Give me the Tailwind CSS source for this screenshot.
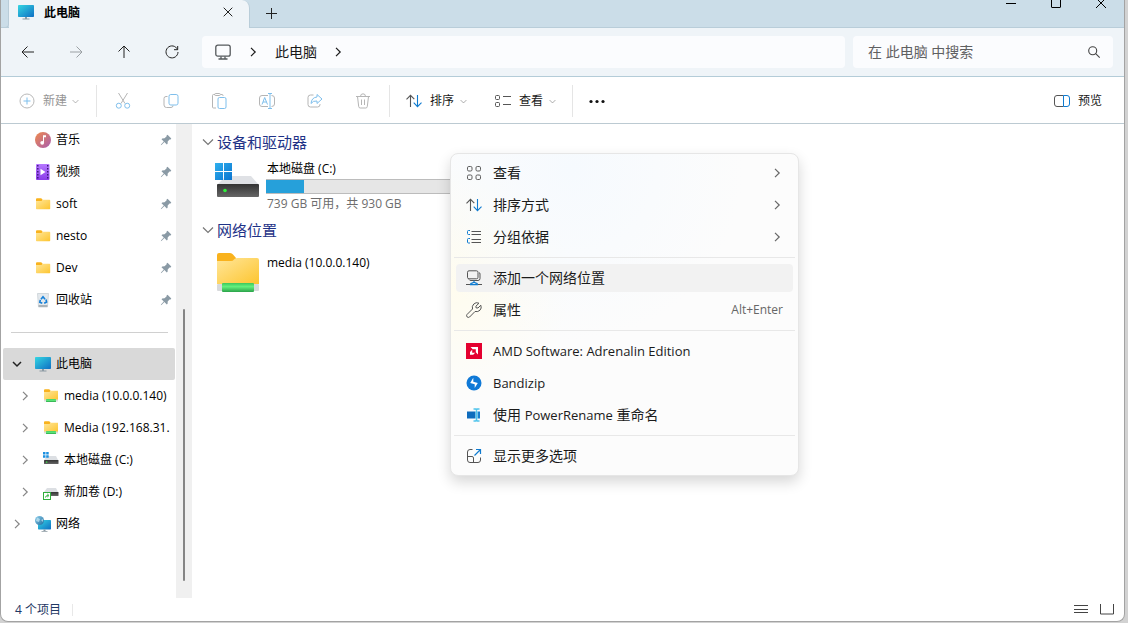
<!DOCTYPE html>
<html lang="zh-CN">
<head>
<meta charset="utf-8">
<meta name="viewport" content="width=device-width, initial-scale=1">
<title>此电脑</title>
<script src="https://cdn.jsdelivr.net/npm/@tailwindcss/browser@4"></script>
</head>
<body class="h-screen overflow-hidden bg-[#d2d2d2] pr-[3px] pb-px font-['Open_Sans','Noto_Sans_CJK_SC',sans-serif] text-xs text-black">
<svg class="absolute size-0" aria-hidden="true">
  <defs>
    <linearGradient id="screen" x1="0" y1="0" x2="1" y2="1"><stop offset="0" stop-color="#35d6e2"/><stop offset="1" stop-color="#0f6fc4"/></linearGradient>
    <linearGradient id="folder" x1="0" y1="0" x2="1" y2="1"><stop offset="0" stop-color="#ffe69a"/><stop offset="1" stop-color="#fdc52f"/></linearGradient>
    <linearGradient id="music" x1="0" y1="0" x2="1" y2="1"><stop offset="0" stop-color="#f08a4b"/><stop offset="1" stop-color="#a85cb0"/></linearGradient>
    <linearGradient id="video" x1="0" y1="0" x2="0" y2="1"><stop offset="0" stop-color="#b678ff"/><stop offset="1" stop-color="#8a3be8"/></linearGradient>
    <linearGradient id="pipe" x1="0" y1="0" x2="0" y2="1"><stop offset="0" stop-color="#3cc75c"/><stop offset=".4" stop-color="#63f07e"/><stop offset="1" stop-color="#2ba34a"/></linearGradient>
    <linearGradient id="drive" x1="0" y1="0" x2="0" y2="1"><stop offset="0" stop-color="#333"/><stop offset="1" stop-color="#666"/></linearGradient>
    <linearGradient id="win" x1="0" y1="0" x2="1" y2="1"><stop offset="0" stop-color="#2fb0ee"/><stop offset="1" stop-color="#0a74cf"/></linearGradient>
    <linearGradient id="globe" x1="0" y1="0" x2="1" y2="1"><stop offset="0" stop-color="#8fd0ee"/><stop offset="1" stop-color="#1f6c9e"/></linearGradient>
  </defs>
  <symbol id="i-pc" viewBox="0 0 16 16"><rect x="0" y="1" width="16" height="12" rx=".8" fill="url(#screen)"/><path d="M7 13h2v2H7zM4.500 14.500h7v1h-7z" fill="#8c9aa3"/></symbol>
  <symbol id="i-folder" viewBox="0 0 16 16"><path d="M1 3.200q0-1 1-1h4.200l1.300 1.300v3H1z" fill="#f9b21d"/><path d="M1 5h5.500l1.200-1.300H14.500q.7 0 .7.700V12.500q0 .7-.7.700H1.700q-.7 0-.7-.7z" fill="url(#folder)"/></symbol>
  <symbol id="i-netfolder" viewBox="0 0 16 16"><path d="M1 2.200q0-1 1-1h4.200l1.300 1.300v3H1z" fill="#f9b21d"/><path d="M1 4h5.500l1.200-1.300H15V12H1z" fill="url(#folder)"/><path d="M1 11.500h14v2H1z" fill="#ddd"/><rect x="3" y="11" width="10" height="3" rx=".5" fill="url(#pipe)"/></symbol>
  <symbol id="i-pin" viewBox="0 0 12 12"><path d="M7.500 .8 11.300 4.500 10.600 5.500 9.500 5.600 7.700 7.500 7.600 9.800 6.800 10.500 4.400 8.100 1.700 10.700 .8 11.200 1.200 10.200 3.800 7.500 1.500 5.200 2.200 4.400 4.500 4.300 6.500 2.500 6.600 1.500Z" fill="#8a9aa5"/></symbol>
  <symbol id="i-right" viewBox="0 0 12 12"><path d="M4 1.800 8.200 6 4 10.200" fill="none" stroke="currentColor" stroke-width="1.200"/></symbol>
  <symbol id="i-down" viewBox="0 0 12 12"><path d="M1 3.500 6 8.500 11 3.500" fill="none" stroke="currentColor" stroke-width="1.200"/></symbol>
  <symbol id="i-sort" viewBox="0 0 16 16"><g fill="none" stroke-width="1.100"><path d="M4.500 14V2.500M.5 6.300 4.500 2.300 8.300 6.100" stroke="#555"/><path d="M11.500 2v11.500M7.700 9.700 11.500 13.600 15.500 9.700" stroke="#0f7bd0"/></g></symbol>
</svg>

<div class="flex h-full flex-col overflow-hidden rounded-b-lg border border-t-0 border-[#a3a3a3] bg-white">
  <header>
    <div class="flex h-7 border-b border-[#b9cdd9] bg-[#cbdde8]">
      <div class="h-7 w-2 shrink-0 rounded-br border-r border-b border-[#b9cdd9]"></div>
      <div class="flex h-7 w-[241px] shrink-0 items-start rounded-tr-lg border-r border-[#b9cdd9] bg-[#eff4f8] pr-4 pl-[9px]">
        <svg class="mt-1 size-4"><use href="#i-pc"/></svg>
        <h1 class="ml-[10px] flex-1 pt-[5px] text-xs leading-4 font-bold">此电脑</h1>
        <button aria-label="关闭标签页" class="mt-[7px]"><svg class="block size-[10px]" viewBox="0 0 10 10"><path d="M.7.7l8.600 8.600M9.300.7.7 9.300" stroke="#222"/></svg></button>
      </div>
      <button aria-label="新建标签页" class="ml-4 flex h-[26px] items-center"><svg class="block size-[11px]" viewBox="0 0 11 11"><path d="M5.500 0v11M0 5.500h11" stroke="#222"/></svg></button>
      <div class="ml-auto flex items-start pr-px">
        <button aria-label="最小化" class="flex w-[45px] justify-center"><svg class="block h-2 w-[10px]" viewBox="0 0 10 8"><path d="M0 3.500h10" stroke="#000"/></svg></button>
        <button aria-label="最大化" class="flex w-[45px] justify-center"><svg class="block h-2 w-[10px]" viewBox="0 0 10 8"><path d="M.5 0v7q0 .5.500.5h8q.5 0 .5-.5V0" stroke="#000" fill="none"/></svg></button>
        <button aria-label="关闭" class="flex w-[45px] justify-center"><svg class="block h-2 w-[10px]" viewBox="0 0 10 8"><path d="M0 8 8 0M10 8 2 0" stroke="#000"/></svg></button>
      </div>
    </div>

    <div class="flex h-[49px] items-center border-b border-[#b4ccd8] bg-[#eff4f8] pr-[11px] pl-[3px]">
      <nav class="flex shrink-0 text-[#222]">
        <button aria-label="后退" class="flex w-12 justify-center"><svg class="size-4" viewBox="0 0 16 16" fill="none" stroke="currentColor"><path d="M14 8H2.200M7.500 2.500 2 8l5.500 5.500"/></svg></button>
        <button aria-label="前进" disabled class="flex w-12 justify-center text-[#9ba0a4]"><svg class="size-4" viewBox="0 0 16 16" fill="none" stroke="currentColor"><path d="M2 8h11.800M8.500 2.500 14 8l-5.500 5.500"/></svg></button>
        <button aria-label="向上" class="flex w-12 justify-center"><svg class="size-4" viewBox="0 0 16 16" fill="none" stroke="currentColor"><path d="M8 14V2.200M2.500 7.500 8 2l5.500 5.500"/></svg></button>
        <button aria-label="刷新" class="flex w-12 justify-center"><svg class="size-4" viewBox="0 0 16 16" fill="none" stroke="currentColor"><path d="M13.500 5.500A6 6 0 1 0 14 8M13.700 2v3.700H10"/></svg></button>
      </nav>
      <div class="ml-[6px] flex h-8 flex-1 items-center rounded bg-[#fbfcfe] pl-[13px] text-sm text-[#191919]">
        <svg class="size-4" viewBox="0 0 16 16" fill="none" stroke="#55595c" stroke-width="1.300"><rect x=".8" y="1.200" width="14.400" height="11" rx="2"/><path d="M6 12.500v2.200M10 12.500v2.200M3.500 15h9"/></svg>
        <svg class="ml-4 size-3"><use href="#i-right"/></svg>
        <a href="#" class="ml-4">此电脑</a>
        <svg class="ml-[15px] size-3"><use href="#i-right"/></svg>
      </div>
      <label class="ml-2 flex h-8 w-[260px] items-center rounded bg-[#fbfcfe] pr-3 pl-[15px]">
        <input type="search" aria-label="搜索" placeholder="在 此电脑 中搜索" class="min-w-0 flex-1 bg-transparent text-sm outline-none placeholder:text-[#5f6062]">
        <svg class="size-[14px]" viewBox="0 0 14 14" fill="none" stroke="#444" stroke-width="1.100"><circle cx="5.700" cy="5.700" r="4"/><path d="M8.700 8.700 12.700 12.700"/></svg>
      </label>
    </div>

    <div class="flex h-[47px] items-center border-b border-[#bccad2] pt-[2px] text-xs text-[#191919]" role="toolbar" aria-label="命令栏">
      <button disabled class="flex w-[95px] items-center pl-[18px] text-[#959595]">
        <svg class="size-4" viewBox="0 0 16 16" fill="none"><circle cx="8" cy="8" r="7" stroke="#b9b9b9"/><path d="M8 4.500v7M4.500 8h7" stroke="#7fbfec"/></svg>
        <span class="ml-2">新建</span>
        <svg class="ml-[5px] size-[7px]"><use href="#i-down"/></svg>
      </button>
      <div class="h-8 w-px bg-[#e5e5e5]"></div>
      <div class="ml-[2px] flex">
        <button disabled aria-label="剪切" class="flex w-12 justify-center"><svg class="size-4" viewBox="0 0 16 16" fill="none"><path d="M3.500 0 10 10.500M12.500 0 6 10.500" stroke="#b5b5b5"/><circle cx="3.800" cy="12.700" r="2.500" stroke="#7fbfec"/><circle cx="12.200" cy="12.700" r="2.500" stroke="#7fbfec"/></svg></button>
        <button disabled aria-label="复制" class="flex w-12 justify-center"><svg class="size-4" viewBox="0 0 16 16" fill="none"><path d="M4.500 3.500H3q-2 0-2 2V12q0 2.500 2.500 2.500H8q2 0 2-2" stroke="#b5b5b5"/><rect x="6" y="1.500" width="9" height="10.500" rx="1.800" stroke="#7fbfec"/></svg></button>
        <button disabled aria-label="粘贴" class="flex w-12 justify-center"><svg class="size-4" viewBox="0 0 16 16" fill="none"><path d="M5 15H2.500q-1 0-1-1V2.500q0-1 1-1H4M9.500 1.500H11q1 0 1 1V3M4.500.5h4q.8 0 .8 1t-.8 1h-4q-.8 0-.8-1t.8-1" stroke="#b5b5b5"/><rect x="7" y="4.500" width="8" height="11" rx="1.500" stroke="#7fbfec"/></svg></button>
        <button disabled aria-label="重命名" class="flex w-12 justify-center"><svg class="size-4" viewBox="0 0 16 16" fill="none"><path d="M9 2.500H3q-2.500 0-2.500 2.500v6q0 2.500 2.500 2.500h6M12.500 2.500q3 0 3 2.500v6q0 2.500-3 2.500" stroke="#b5b5b5"/><path d="M11 .5v15M9 .5h4M9 15.500h4M3 11.500 5.700 4.500 8.500 11.500M4 9h3.500" stroke="#7fbfec"/></svg></button>
        <button disabled aria-label="共享" class="flex w-12 justify-center"><svg class="size-4" viewBox="0 0 16 16" fill="none"><path d="M6.500 2H3.500Q1 2 1 4.500v7Q1 14 3.500 14h7q2.500 0 2.500-2.500V11" stroke="#b5b5b5"/><path d="M10 1.500 15 6l-5 4.500V8Q6 7.500 4 10.500 4.500 4.500 10 4Z" stroke="#7fbfec" stroke-linejoin="round"/></svg></button>
        <button disabled aria-label="删除" class="flex w-12 justify-center"><svg class="size-4" viewBox="0 0 16 16" fill="none" stroke="#b5b5b5"><path d="M1 3.500h14M5.500 3.500Q5.500.8 8 .8t2.500 2.700M2.500 3.500l1.200 10q.2 1.500 1.500 1.500h5.600q1.300 0 1.500-1.500l1.200-10M6.500 6.500v5.500M9.500 6.500v5.500"/></svg></button>
      </div>
      <div class="ml-[2px] h-8 w-px bg-[#e5e5e5]"></div>
      <button class="ml-4 flex items-center"><svg class="size-4"><use href="#i-sort"/></svg><span class="ml-2">排序</span><svg class="ml-[6px] size-[7px] text-[#888]"><use href="#i-down"/></svg></button>
      <button class="ml-7 flex items-center"><svg class="size-4" viewBox="0 0 16 16" fill="none" stroke="#555"><rect x=".5" y="2.500" width="4" height="4" rx="1"/><rect x=".5" y="9.500" width="4" height="4" rx="1"/><path d="M8 3.500h8M8 11.500h8"/></svg><span class="ml-2">查看</span><svg class="ml-[6px] size-[7px] text-[#888]"><use href="#i-down"/></svg></button>
      <div class="ml-4 h-8 w-px bg-[#e5e5e5]"></div>
      <button aria-label="更多" class="ml-4"><svg class="size-4" viewBox="0 0 16 16" fill="#111"><circle cx="2" cy="8.500" r="1.600"/><circle cx="8" cy="8.500" r="1.600"/><circle cx="14" cy="8.500" r="1.600"/></svg></button>
      <button class="mr-[22px] ml-auto flex items-center gap-2"><svg class="size-4" viewBox="0 0 16 16" fill="none"><path d="M9.500 2.500H3Q.5 2.500.5 5v6Q.5 13.500 3 13.500h6.500" stroke="#555"/><path d="M9.500 2.500H13q2.500 0 2.500 2.500v6q0 2.500-2.500 2.500H9.500z" stroke="#0f7bd0"/></svg><span>预览</span></button>
    </div>
  </header>

  <div class="flex min-h-0 flex-1">
    <aside class="w-[175px] shrink-0 overflow-hidden">
      <ul>
        <li class="flex h-8 items-center pr-1 pl-[34px]"><svg class="size-4" viewBox="0 0 16 16"><circle cx="8" cy="8" r="8" fill="url(#music)"/><path d="M8 3.300h3v2H9v5.200H8z" fill="#fff"/><circle cx="7.200" cy="10.800" r="1.900" fill="#fff"/></svg><a href="#" class="ml-[5px] flex-1">音乐</a><svg class="size-3"><use href="#i-pin"/></svg></li>
        <li class="flex h-8 items-center pr-1 pl-[34px]"><svg class="size-4" viewBox="0 0 16 16"><rect x="1" width="13.500" height="16" rx="1" fill="url(#video)"/><path d="M2.800 1v14M12.700 1v14" stroke="#3d1678" stroke-width="1.400" stroke-dasharray="1.500 1.500"/><path d="M5.500 4.800 10.500 8l-5 3.200z" fill="#fff"/></svg><a href="#" class="ml-[5px] flex-1">视频</a><svg class="size-3"><use href="#i-pin"/></svg></li>
        <li class="flex h-8 items-center pr-1 pl-[34px]"><svg class="size-4"><use href="#i-folder"/></svg><a href="#" class="ml-[5px] flex-1">soft</a><svg class="size-3"><use href="#i-pin"/></svg></li>
        <li class="flex h-8 items-center pr-1 pl-[34px]"><svg class="size-4"><use href="#i-folder"/></svg><a href="#" class="ml-[5px] flex-1">nesto</a><svg class="size-3"><use href="#i-pin"/></svg></li>
        <li class="flex h-8 items-center pr-1 pl-[34px]"><svg class="size-4"><use href="#i-folder"/></svg><a href="#" class="ml-[5px] flex-1">Dev</a><svg class="size-3"><use href="#i-pin"/></svg></li>
        <li class="flex h-8 items-center pr-1 pl-[34px]"><svg class="size-4" viewBox="0 0 16 16"><path d="M2.500 1.500h11l-1 13.500h-9z" fill="#e4e9ed" stroke="#c3cbd1" stroke-width=".7"/><path d="M3.500 13h9l-.2 2H3.700z" fill="#aab3b9"/><path d="M6 7.200 8 4.800l2 2.400M11 7.500l.6 2.500-2.400 1.200M7.300 11.200 4.800 10.200 5.300 7.800" stroke="#1680d8" stroke-width="1.600" fill="none"/></svg><a href="#" class="ml-[5px] flex-1">回收站</a><svg class="size-3"><use href="#i-pin"/></svg></li>
      </ul>
      <hr class="mt-4 mr-2 mb-[15px] ml-[10px] border-[#d0d0d0]">
      <ul>
        <li class="mr-px ml-[2px] flex h-8 items-center rounded-xs bg-[#d9d9d9] pl-[9px]"><button aria-label="折叠"><svg class="block size-[10px] text-[#222]" viewBox="0 0 10 10"><path d="M1 3 5 7 9 3" fill="none" stroke="currentColor" stroke-width="1.500"/></svg></button><svg class="ml-[13px] size-4"><use href="#i-pc"/></svg><a href="#" class="ml-[5px]">此电脑</a></li>
        <li class="flex h-8 items-center overflow-hidden pl-[18px] whitespace-nowrap"><button aria-label="展开" class="text-[#858585]"><svg class="block size-3"><use href="#i-right"/></svg></button><svg class="ml-3 size-4 shrink-0"><use href="#i-netfolder"/></svg><a href="#" class="ml-[5px]">media (10.0.0.140)</a></li>
        <li class="flex h-8 items-center overflow-hidden pl-[18px] whitespace-nowrap"><button aria-label="展开" class="text-[#858585]"><svg class="block size-3"><use href="#i-right"/></svg></button><svg class="ml-3 size-4 shrink-0"><use href="#i-netfolder"/></svg><a href="#" class="ml-[5px]">Media (192.168.31.</a></li>
        <li class="flex h-8 items-center pl-[18px]"><button aria-label="展开" class="text-[#858585]"><svg class="block size-3"><use href="#i-right"/></svg></button><svg class="ml-3 size-4" viewBox="0 0 16 16"><path d="M4 4h9l2 4H1z" fill="#dcdfe3"/><rect x="1" y="8" width="14.500" height="4" rx=".5" fill="url(#drive)"/><rect x="3" y="9.500" width="1.300" height="1.300" fill="#3fe04a"/><path d="M0 0h2.500v2.500H0zM3.200 0h2.500v2.500H3.200zM0 3.200h2.500v2.500H0zM3.200 3.200h2.500v2.500H3.200z" fill="#1c90e0"/></svg><a href="#" class="ml-[5px]">本地磁盘 (C:)</a></li>
        <li class="flex h-8 items-center pl-[18px]"><button aria-label="展开" class="text-[#858585]"><svg class="block size-3"><use href="#i-right"/></svg></button><svg class="ml-3 size-4" viewBox="0 0 16 16"><path d="M4 4h9l2 4H1z" fill="#dcdfe3"/><rect x="1" y="8" width="14.500" height="4" rx=".5" fill="url(#drive)"/><rect x=".5" y="8.500" width="7" height="7" fill="#fff" stroke="#2fae3c"/><path d="M2.500 13.500q0-2 2.500-2M4.300 10l1.700 1.500L4.300 13" fill="none" stroke="#2fae3c"/></svg><a href="#" class="ml-[5px]">新加卷 (D:)</a></li>
        <li class="flex h-8 items-center pl-[10px]"><button aria-label="展开" class="text-[#858585]"><svg class="block size-3"><use href="#i-right"/></svg></button><svg class="ml-3 size-4" viewBox="0 0 16 16"><rect x="3" y="4" width="13" height="9.500" rx=".7" fill="url(#screen)"/><path d="M8.500 13.500h2v1.500h2v.8h-6V15h2z" fill="#8c9aa3"/><circle cx="4.500" cy="4.500" r="4.500" fill="url(#globe)"/><path d="M2 1.500 5 3 4 6 1 5zM6 4l2-1v3z" fill="#c9e9f5" opacity=".7"/></svg><a href="#" class="ml-[5px]">网络</a></li>
      </ul>
    </aside>
    <div class="flex w-4 shrink-0 flex-col items-center bg-[#f0f0f0]">
      <div class="mt-auto mb-[17px] h-[272px] w-[2px] rounded-full bg-[#858585]"></div>
    </div>

    <main class="min-w-0 flex-1 pt-2 pl-[10px]">
      <section>
        <h2 class="flex h-5 items-center gap-[3px] text-[15px] text-[#1e3287]"><svg class="size-3 text-[#777]"><use href="#i-down"/></svg>设备和驱动器</h2>
        <div class="mt-2 flex pl-3">
          <svg class="mt-[2px] h-10 w-[46px]" viewBox="0 0 46 40"><path d="M12 14h25l8 9H3z" fill="#dfe1e5"/><rect x="3" y="22" width="42" height="13" rx="1" fill="url(#drive)"/><circle cx="11" cy="28.500" r="1.800" fill="#2ef03a"/><path d="M1 1h8v8H1zM10 1h8v8h-8zM1 10h8v8H1zM10 10h8v8h-8z" fill="url(#win)"/></svg>
          <div class="ml-[6px] w-[232px]">
            <a href="#" class="ml-px block leading-[18px]">本地磁盘 (C:)</a>
            <div class="mt-px h-[15px] border-y border-[#bcbcbc] bg-[#e6e6e6]" role="meter" aria-label="已用空间" aria-valuenow="191" aria-valuemin="0" aria-valuemax="930"><div class="h-full w-[38px] bg-[#26a0da]"></div></div>
            <p class="mt-px ml-px leading-[18px] text-[#6d6d6d]">739 GB 可用，共 930 GB</p>
          </div>
        </div>
      </section>
      <section class="mt-[7px]">
        <h2 class="flex h-5 items-center gap-[3px] text-[15px] text-[#1e3287]"><svg class="size-3 text-[#777]"><use href="#i-down"/></svg>网络位置</h2>
        <div class="mt-3 flex pl-3">
          <svg class="h-[42px] w-[46px]" viewBox="0 0 46 42"><path d="M3 3q0-2 2-2h11q2 0 3 1.500L22 6v10H3z" fill="#f9b21d"/><path d="M3 9h14q2 0 3-1.500t3-1.500H43q2 0 2 2V32H3z" fill="url(#folder)"/><rect x="3" y="32" width="42" height="7" rx="1" fill="#d8dadc"/><rect x="8" y="31" width="32" height="9" rx="1" fill="url(#pipe)"/></svg>
          <a href="#" class="mt-[2px] ml-[7px] leading-[18px]">media (10.0.0.140)</a>
        </div>
      </section>
    </main>
  </div>

  <footer class="flex h-[23px] shrink-0 items-center pr-[10px] pl-[14px] text-[#1f3864]">
    <p>4 个项目</p>
    <div class="ml-[11px] h-3 w-px bg-[#e8e8e8]"></div>
    <button aria-label="详细信息" class="ml-auto"><svg class="block h-[11px] w-[14px]" viewBox="0 0 14 11"><path d="M0 1.500h14M0 5.500h14M0 8.500h14" stroke="#444"/></svg></button>
    <button aria-label="大图标" class="ml-3"><svg class="block h-[11px] w-[14px]" viewBox="0 0 14 11"><path d="M.5 0v10h13V0" fill="none" stroke="#444"/></svg></button>
  </footer>
</div>

<div role="menu" class="absolute top-[153px] left-[450px] flex w-[349px] flex-col rounded-lg border border-[#e6e6e6] bg-[#fcfcfc] bg-[radial-gradient(circle_at_35%_5%,#f6fafe_0%,transparent_45%),radial-gradient(circle_at_0%_40%,#fffcee_0%,transparent_30%)] py-[3px] text-sm text-[#1b1b1b] shadow-[0_6px_14px_rgba(0,0,0,0.16)]">
  <button role="menuitem" class="flex h-8 items-center pr-[15px] pl-[15px]"><svg class="size-4" viewBox="0 0 16 16" fill="none" stroke="#5c5c5c"><rect x="1.500" y="1.500" width="4.500" height="4.500" rx="1.300"/><rect x="10" y="1.500" width="4.500" height="4.500" rx="1.300"/><rect x="1.500" y="10" width="4.500" height="4.500" rx="1.300"/><rect x="10" y="10" width="4.500" height="4.500" rx="1.300"/></svg><span class="ml-[11px]">查看</span><svg class="ml-auto size-3 text-[#666]"><use href="#i-right"/></svg></button>
  <button role="menuitem" class="flex h-8 items-center pr-[15px] pl-[15px]"><svg class="size-4"><use href="#i-sort"/></svg><span class="ml-[11px]">排序方式</span><svg class="ml-auto size-3 text-[#666]"><use href="#i-right"/></svg></button>
  <button role="menuitem" class="flex h-8 items-center pr-[15px] pl-[15px]"><svg class="size-4" viewBox="0 0 16 16" fill="none"><path d="M5.500 2.500h9.500M5.500 5.500h9.500M5.500 10.500h9.500M5.500 13.500h9.500" stroke="#555"/><path d="M4 1.500H2.500q-1 0-1 1v2q0 1 1 1H4M4 9.500H2.500q-1 0-1 1v2.500q0 1 1 1H4" stroke="#0f7bd0"/></svg><span class="ml-[11px]">分组依据</span><svg class="ml-auto size-3 text-[#666]"><use href="#i-right"/></svg></button>
  <hr class="mx-[3px] my-1 border-[#e8e8e8]">
  <button role="menuitem" class="mx-[5px] my-[2px] flex h-7 items-center rounded bg-[#f2f2f2] pl-[10px]"><svg class="size-4" viewBox="0 0 16 16" fill="none"><rect x="1.500" y=".8" width="10.500" height="8" rx="1.500" stroke="#555"/><path d="M13 2.500q1 .3 1 1.500v4.500q0 2-2 2H5q-1.500 0-2-1" stroke="#555"/><path d="M0 14.500h4M12 14.500h4" stroke="#555"/><path d="M8 10.500v2M4.500 14.700Q4.500 13.200 6 13.200 8 11.500 10 13.200 11.500 13.200 11.500 14.700Z" stroke="#0f7bd0" stroke-width="1.200"/></svg><span class="ml-[11px]">添加一个网络位置</span></button>
  <button role="menuitem" class="flex h-8 items-center pr-[15px] pl-[15px]"><svg class="size-4" viewBox="0 0 16 16" fill="none" stroke="#555" stroke-linejoin="round"><path d="M13 1.200Q10-.2 7.800 2T6.500 7L1 12.500Q0 13.800 1.100 14.900T3.600 15L9 9.500Q12 10.200 14 8.200T14.800 3.200L12 6 10 5.800 9.900 4.200Z"/></svg><span class="ml-[11px]">属性</span><kbd class="ml-auto font-[inherit] text-xs text-[#666]">Alt+Enter</kbd></button>
  <hr class="mx-[3px] my-1 border-[#e8e8e8]">
  <button role="menuitem" class="flex h-8 items-center pl-[15px] text-[13px]"><svg class="size-4" viewBox="0 0 16 16"><path d="M0 0h16v16H0z" fill="#e4002f"/><path d="M4.500 4h7.500v7.500L9.800 9.300V6.200H6.700zM6.200 6.800v3h3l-2 2H4V9z" fill="#fff"/></svg><span class="ml-[11px]">AMD Software: Adrenalin Edition</span></button>
  <button role="menuitem" class="flex h-8 items-center pl-[15px] text-[13px]"><svg class="size-4" viewBox="0 0 16 16"><circle cx="8" cy="8" r="7.500" fill="#1079d6"/><path d="M7.300 2.800V6.800L11.800 8 8.700 13V9.200L4.200 8z" fill="#fff"/></svg><span class="ml-[11px]">Bandizip</span></button>
  <button role="menuitem" class="flex h-8 items-center pl-[15px]"><svg class="size-4" viewBox="0 0 16 16"><rect x="1" y="4.500" width="8.500" height="7" fill="#0f6cbd"/><path d="M11.500 4.500H14v7h-2.500z" fill="#1b80d0"/><path d="M7.500 2h2.200l.8.500.8-.5h2.200M7.500 14h2.200l.8-.5.8.5h2.200M10.500 2.500v11" stroke="#50c4ec" stroke-width="1.600" fill="none"/></svg><span class="ml-[11px]">使用 <span class="text-[13px]">PowerRename</span> 重命名</span></button>
  <hr class="mx-[3px] my-1 border-[#e8e8e8]">
  <button role="menuitem" class="flex h-8 items-center pl-[15px]"><svg class="size-4" viewBox="0 0 16 16" fill="none"><path d="M6.500 1.500H4Q1.500 1.500 1.500 4v8Q1.500 14.500 4 14.500h8q2.500 0 2.500-2.500V9.500M1.500 8.500H6Q7.500 8.500 7.500 10v4.500" stroke="#555"/><path d="M8.500 7.500 14.500 1.500M10 1.500h4.500V6" stroke="#0f7bd0" stroke-width="1.200"/></svg><span class="ml-[11px]">显示更多选项</span></button>
</div>
</body>
</html>
